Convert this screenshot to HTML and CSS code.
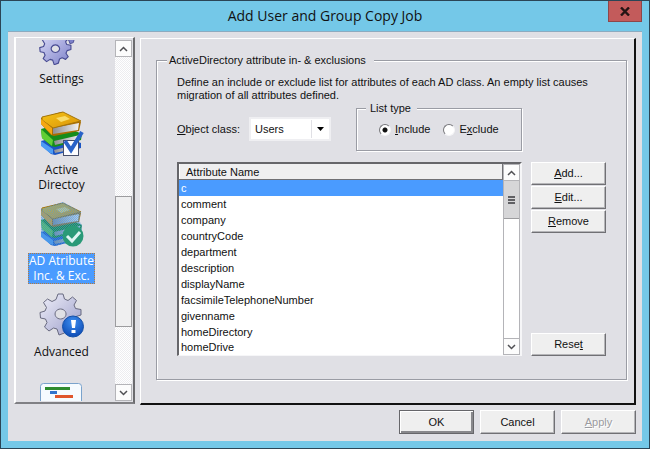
FILE: index.html
```html
<!DOCTYPE html>
<html lang="en">
<head>
<meta charset="utf-8">
<title>Add User and Group Copy Job</title>
<link rel="stylesheet" href="styles.css">
</head>
<body>
<svg class="defs" aria-hidden="true">
  <defs>
    <linearGradient id="gearFill" x1="0" y1="0" x2="1" y2="1">
      <stop offset="0" stop-color="#f0f0fa"/><stop offset="1" stop-color="#9a9cc8"/>
    </linearGradient>
    <linearGradient id="violetFill" x1="0" y1="0" x2="1" y2="1">
      <stop offset="0" stop-color="#dcdcf8"/><stop offset="1" stop-color="#7c80c8"/>
    </linearGradient>
    <linearGradient id="gold" x1="0" y1="0" x2="1" y2="1">
      <stop offset="0" stop-color="#f5c416"/><stop offset="1" stop-color="#d99208"/>
    </linearGradient>
    <linearGradient id="pages" x1="0" y1="0" x2="1" y2="0">
      <stop offset="0" stop-color="#8e8e92"/><stop offset="1" stop-color="#f2f2f2"/>
    </linearGradient>
    <radialGradient id="blueBadge" cx=".5" cy=".3" r=".7">
      <stop offset="0" stop-color="#3f8ff0"/><stop offset="1" stop-color="#0d4bb5"/>
    </radialGradient>
    <pattern id="dither" width="2" height="2" patternUnits="userSpaceOnUse">
      <rect width="1" height="1" fill="#3d94f6"/><rect x="1" y="1" width="1" height="1" fill="#3d94f6"/>
    </pattern>
    <path id="gear" stroke-linejoin="round" fill-rule="evenodd" d="M19 2 L24 2 L25.500 7 L29 8.500 L33.500 5 L37.500 8.500 L35 13 L36.500 16.500 L42 17.500 L42 23 L37 24.500 L35.500 28 L38.500 32.500 L35 36 L30.500 34 L27 35.500 L25.500 41 L20 43 L18 37 L14.500 36 L10 39 L5.500 35 L8 30.500 L6.500 27 L1.500 26 L1 20.500 L6 19 L7.500 15.500 L4.500 10.500 L8.500 7 L13 9.500 L17 7.500 Z M21.500 17 A5.500 5 0 1 0 21.600 17 Z"/>
    <g id="books">
      <path fill="#1b55c4" d="M2 31 L22 26 L42 33 L42 38 L16 45 L12 44 L2 35 Z"/>
      <path fill="#4d9cf4" d="M2 31 L14 39 L14 44 L11 43 L2 36 Z"/>
      <path fill="url(#pages)" d="M15 40 L40 34 L40 38 L16 43 Z"/>
      <path fill="#168c1b" d="M2 19 L21 14 L43 24 L42 30 L16 37 L12 36 L3 28 Z"/>
      <path fill="#62cf35" d="M2 19 L14 30 L13 36 L3 28 Z"/>
      <path fill="url(#pages)" d="M15 31 L41 25 L40 29 L16 35 Z"/>
      <path fill="#a96d04" d="M2 8 L22 2 L42 12 L40 21 L15 26 L12 25 L2 14 Z"/>
      <path fill="url(#pages)" d="M14 18 L40 13 L39 20 L14 24 Z"/>
      <path fill="url(#gold)" stroke="#a37409" d="M3 7 L24 2 L42 11 L14 18 L3 10 Z"/>
      <path fill="#f4a711" d="M2 9 L13 18 L13 25 L2 14 Z"/>
      <path fill="#f9dc69" d="M17 8 L26 6 L31 9 L22 12 Z"/>
    </g>
  </defs>
</svg>

<div class="dialog">
  <header class="titlebar">
    <h1>Add User and Group Copy Job</h1>
    <button class="close" type="button" aria-label="Close"><svg width="10" height="9" viewBox="0 0 10 9"><path d="M1 .5 L9 8.500 M9 .5 L1 8.500" stroke="#241414" stroke-width="2.400"/></svg></button>
  </header>

  <div class="client">
    <div class="content">
      <aside class="sidebar">
        <nav>
          <a class="page" href="#settings">
            <svg viewBox="0 0 46 46"><g transform="translate(19 -1) scale(.6)"><use href="#gear" fill="#7c80c8" stroke="#484b92" stroke-width="1.500"/></g><g transform="translate(0 13) scale(.76)"><use href="#gear" fill="url(#violetFill)" stroke="#484b92" stroke-width="1.500"/></g></svg>
            <span>Settings</span>
          </a>
          <a class="page" href="#active-directory">
            <svg viewBox="0 0 46 46"><use href="#books"/><rect x="24.500" y="30.500" width="15" height="15" fill="#fdfdff" stroke="#48506c"/><path d="M26 31 L32 40 L43 22" fill="none" stroke="#2a63c8" stroke-width="4"/></svg>
            <span>Active<br>Directoy</span>
          </a>
          <a class="page current" href="#attributes" aria-current="page">
            <svg viewBox="0 0 46 46"><use href="#books"/>
              <path fill="#4f94c8" opacity=".35" d="M2 8 L24 1 L42 11 L40 20 L43 24 L42 38 L16 45 L12 44 L2 35 Z"/>
              <path fill="url(#dither)" opacity=".5" d="M2 8 L24 1 L42 11 L40 20 L43 24 L42 38 L16 45 L12 44 L2 35 Z"/>
              <circle cx="34" cy="35" r="10.500" fill="#2a9a78"/><path d="M28 35 L33 40 L41 31" fill="none" stroke="#dff5f3" stroke-width="3"/></svg>
            <span>AD Atribute<br>Inc. &amp; Exc.</span>
          </a>
          <a class="page" href="#advanced">
            <svg viewBox="0 0 46 46"><use href="#gear" fill="url(#gearFill)" stroke="#696a80"/><circle cx="34" cy="34.500" r="10.500" fill="url(#blueBadge)" stroke="#1450a8"/><path d="M32 28 H37 L36 36 H33 Z M32.500 38 H36.500 V41 H32.500 Z" fill="#fff"/></svg>
            <span>Advanced</span>
          </a>
          <a class="page" href="#report" aria-label="Report">
            <svg viewBox="0 0 46 46"><rect x="1.500" y=".5" width="41" height="44" rx="3" fill="#f6fbff" stroke="#7aa3cc"/><path fill="#2e8b2e" d="M6 4 H31 V7 H6 Z"/><path fill="#3273cc" d="M11 8 H18 V11 H11 Z"/><path fill="#e0562c" d="M16 12 H34 V15 H16 Z"/></svg>
          </a>
        </nav>
        <div class="scroll">
          <button type="button" aria-label="Scroll up"><svg width="9" height="6" viewBox="0 0 9 6"><path d="M1 5 L4.500 1.500 L8 5"/></svg></button>
          <div class="track"><div class="thumb"></div></div>
          <button type="button" aria-label="Scroll down"><svg width="9" height="6" viewBox="0 0 9 6"><path d="M1 1 L4.500 4.500 L8 1"/></svg></button>
        </div>
      </aside>

      <main class="panel">
        <fieldset class="group">
          <legend>ActiveDirectory attribute in- &amp; exclusions</legend>
          <p>Define an include or exclude list for attributes of each AD class. An empty list causes migration of all attributes defined.</p>
          <div class="filters">
            <label for="object-class"><u>O</u>bject class:</label>
            <div class="combo">
              <select id="object-class"><option>Users</option></select>
              <svg width="7" height="4" viewBox="0 0 7 4"><path d="M0 0 H7 L3.500 4 Z"/></svg>
            </div>
            <fieldset class="list-type">
              <legend>List type</legend>
              <label><input type="radio" name="list-type" checked><span><u>I</u>nclude</span></label>
              <label><input type="radio" name="list-type"><span>E<u>x</u>clude</span></label>
            </fieldset>
          </div>
          <div class="body">
            <div class="listbox">
              <table>
                <thead><tr><th>Attribute Name</th></tr></thead>
                <tbody>
                  <tr class="selected"><td>c</td></tr>
                  <tr><td>comment</td></tr>
                  <tr><td>company</td></tr>
                  <tr><td>countryCode</td></tr>
                  <tr><td>department</td></tr>
                  <tr><td>description</td></tr>
                  <tr><td>displayName</td></tr>
                  <tr><td>facsimileTelephoneNumber</td></tr>
                  <tr><td>givenname</td></tr>
                  <tr><td>homeDirectory</td></tr>
                  <tr><td>homeDrive</td></tr>
                </tbody>
              </table>
              <div class="scroll plain">
                <button type="button" aria-label="Scroll up"><svg width="9" height="6" viewBox="0 0 9 6"><path d="M1 5 L4.500 1.500 L8 5"/></svg></button>
                <div class="track"><div class="thumb grip"><i></i><i></i><i></i></div></div>
                <button type="button" aria-label="Scroll down"><svg width="9" height="6" viewBox="0 0 9 6"><path d="M1 1 L4.500 4.500 L8 1"/></svg></button>
              </div>
            </div>
            <div class="actions">
              <button class="btn" type="button"><u>A</u>dd...</button>
              <button class="btn" type="button"><u>E</u>dit...</button>
              <button class="btn" type="button"><u>R</u>emove</button>
              <button class="btn last" type="button">Rese<u>t</u></button>
            </div>
          </div>
        </fieldset>
      </main>
    </div>

    <footer>
      <button class="btn default" type="button">OK</button>
      <button class="btn" type="button">Cancel</button>
      <button class="btn" type="button" disabled><u>A</u>pply</button>
    </footer>
  </div>
</div>
</body>
</html>
```
FILE: styles.css
```css
* { box-sizing: border-box; }

:root {
  --face: #e0e0e5;
  --line: #9a9ca4;
  --dark: #6b6b6e;
  --select: #4a9bff;
}

body {
  margin: 0;
  background: #74c8e8;
  color: #111;
  font: 11px/13px "Liberation Sans", Arial, sans-serif;
}

button, select, input { font: inherit; color: inherit; margin: 0; }

.defs { position: absolute; width: 0; height: 0; }

.dialog {
  display: flex;
  flex-direction: column;
  height: 100vh;
  padding: 0 7px 7px;
  border: 1px solid #2b4556;
}

.titlebar {
  display: grid;
  grid-template-columns: 1fr auto 1fr;
  align-items: start;
  height: 30px;
}

.titlebar h1 {
  grid-column: 2;
  margin: 0;
  font: 14px/29px "Open Sans", "Noto Sans", sans-serif;
}

.close {
  justify-self: end;
  display: grid;
  place-items: center;
  width: 34px;
  height: 21px;
  padding: 0;
  border: 1px solid #8e4649;
  border-top: 0;
  background: #c35b5b;
}

.client {
  flex: 1;
  min-height: 0;
  display: flex;
  flex-direction: column;
  padding: 5px 6px 7px;
  background: var(--face);
  border-top: 1px solid #8cabc0;
}

.content { flex: 1; min-height: 0; display: flex; gap: 5px; }

.sidebar {
  display: flex;
  width: 121px;
  margin-bottom: 1px;
  padding: 2px 1px 1px 0;
  border: 1px solid #fff;
  border-left-width: 2px;
  border-right: 2px solid var(--dark);
  border-bottom: 2px solid #808084;
}

.sidebar nav { flex: 1; overflow: hidden; }

.page {
  display: flex;
  flex-direction: column;
  align-items: center;
  height: 91px;
  padding: 1px 8px 0 0;
  color: inherit;
  font: 12px/15px "Open Sans", "Noto Sans", sans-serif;
  text-align: center;
  text-decoration: none;
}

.page:first-child { margin-top: -22px; }
.page svg { flex: none; width: 46px; height: 46px; }
.page span { margin-top: 6px; padding: 0 1px 1px; white-space: nowrap; }
.current span { background: var(--select); color: #fff; outline: 1px dotted #b77a3c; outline-offset: -1px; }

.scroll { display: flex; flex-direction: column; flex: none; width: 17px; }

.scroll button {
  display: grid;
  place-items: center;
  height: 17px;
  padding: 0;
  border: 1px solid #b4b4b8;
  background: #fcfcfc;
}

.scroll path { fill: none; stroke: #505054; stroke-width: 1.5; }

.track {
  flex: 1;
  display: flex;
  flex-direction: column;
  padding-top: 139px;
  background: repeating-conic-gradient(#fff 0 25%, #ededf0 0 50%) 0 0 / 2px 2px;
}

.thumb { height: 131px; border: 1px solid #9c9c9f; background: #efeff0; }

.plain .track { padding-top: 0; border: solid #b4b4b8; border-width: 0 1px; background: #fff; }

.grip {
  display: flex;
  flex-direction: column;
  align-items: center;
  justify-content: center;
  gap: 1px;
  height: 38px;
  border-width: 0 0 1px;
  background: #d6d6d8;
}

.grip i { width: 7px; height: 2px; background: #606064; }

.panel {
  flex: 1;
  min-width: 0;
  display: flex;
  margin-top: 1px;
  padding: 15px 7px 23px 15px;
  border: 1px solid #fff;
  border-right: 2px solid #111;
  border-bottom: 2px solid #111;
}

fieldset {
  min-width: 0;
  margin: 0;
  border: 1px solid var(--line);
  box-shadow: 1px 1px 0 #fff, inset 1px 1px 0 #fff;
}

legend { background: var(--face); }

.group { flex: 1; padding: 9px 20px 0; }
.group > legend { padding: 0 8px 0 2px; margin-left: -10px; }
.group p { margin: 0; }

.filters { display: flex; align-items: flex-start; margin: 0 84px 11px 0; }
.filters > label { width: 72px; margin-top: 21px; }

.combo { position: relative; width: 82px; height: 24px; margin-top: 15px; border: 2px solid #efeff2; }

.combo select {
  width: 100%;
  height: 20px;
  padding: 0 3px;
  border: 1px solid #fff;
  border-radius: 0;
  background: linear-gradient(#e0e0e5, #e0e0e5) right 16px top / 1px 100% no-repeat #fff;
  appearance: none;
}

.combo svg { position: absolute; right: 5px; top: 8px; pointer-events: none; }

.list-type {
  display: flex;
  gap: 13px;
  width: 166px;
  margin-left: auto;
  padding: 8px 20px 14px 22px;
}

.list-type legend { margin-left: -13px; padding: 0 6px 0 4px; }
.list-type label { display: flex; align-items: center; gap: 4px; }

input[type="radio"] {
  width: 12px;
  height: 12px;
  border: 1px solid;
  border-color: #77777b #f4f4f6 #f4f4f6 #77777b;
  border-radius: 50%;
  background: #fff;
  appearance: none;
}

input[type="radio"]:checked { background: radial-gradient(circle, #111 2px, #fff 3px); }

.body { display: flex; gap: 9px; }

.listbox {
  flex: 1;
  display: flex;
  align-items: flex-start;
  border: 2px solid;
  border-color: #66666a #f6f6f8 #f6f6f8 #66666a;
  border-bottom-width: 1px;
  background: #fff;
}

.listbox .scroll { align-self: stretch; }

table { flex: 1; border-collapse: collapse; }
th, td { height: 16px; padding: 0 2px; text-align: left; font-weight: normal; }
tr:last-child td { height: 15px; }
th { padding-left: 7px; background: #efeff0; box-shadow: inset -1px -1px 0 #707074, inset 1px 0 0 #fff; }
tbody .selected { background: var(--select); color: #fff; }

.actions { display: flex; flex-direction: column; gap: 1px; width: 75px; }

.btn {
  width: 75px;
  height: 23px;
  padding: 0;
  border: 1px solid;
  border-color: #fff #707074 #707074 #fff;
  background: #efefef;
  box-shadow: inset -1px -1px 0 #b5b5b8;
}

.btn.last { margin-top: auto; }
.btn.default { border-color: #66666a; box-shadow: inset 1px 1px 0 #fff, inset -2px -2px 0 #88888c; }
.btn:disabled { color: #9b9ba0; text-shadow: 1px 1px 0 #fff; }

footer { display: flex; justify-content: flex-end; gap: 6px; padding-top: 5px; }
footer .btn { height: 24px; }
```
